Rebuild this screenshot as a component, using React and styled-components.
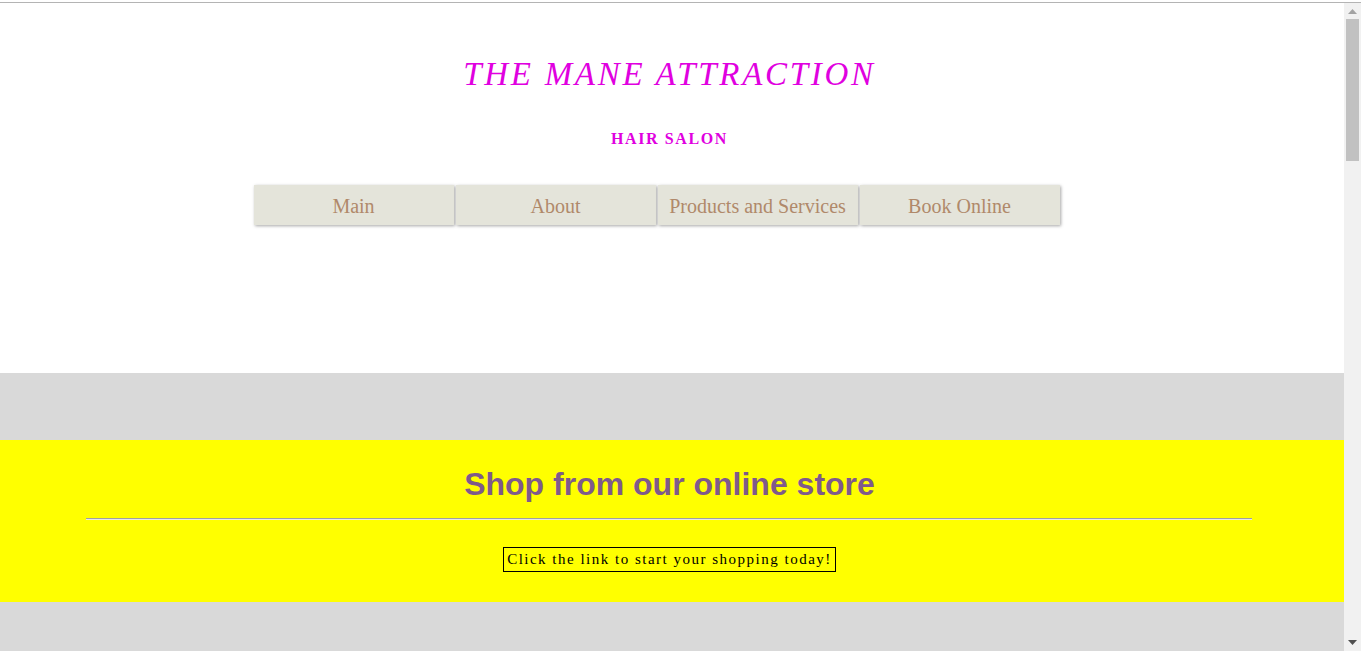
import React from 'react'
import styled, { createGlobalStyle } from 'styled-components'

const GlobalStyle = createGlobalStyle`
  html,
  body {
    margin: 0;
    padding: 0;
    height: 100%;
    overflow: hidden;
    background: #fff;
  }
`

const Window = styled.div`
  display: flex;
  flex-direction: column;
  width: 1361px;
  height: 651px;
`

const TopRule = styled.div`
  height: 2px;
  border-bottom: 1px solid #b4b4b4;
  background: #fff;
`

const Viewport = styled.div`
  flex: 1;
  display: flex;
  min-height: 0;
`

const Page = styled.main`
  flex: 1;
  overflow: hidden;
  background: #d9d9d9;
`

const Header = styled.header`
  display: flex;
  flex-direction: column;
  align-items: center;
  background: #fff;
  padding: 51px 5px 148px 0;
`

const Title = styled.h1`
  margin: 0;
  font-family: 'Liberation Serif', 'Times New Roman', serif;
  font-style: italic;
  font-weight: 400;
  font-size: 33px;
  line-height: 40px;
  letter-spacing: 2.7px;
  color: #e000e0;
`

const Tagline = styled.h2`
  margin: 35px 0 0;
  font-family: 'Liberation Serif', 'Times New Roman', serif;
  font-weight: 700;
  font-size: 16px;
  line-height: 20px;
  letter-spacing: 1.6px;
  color: #e000e0;
`

const Nav = styled.nav`
  display: flex;
  gap: 2px;
  margin: 36px 26px 0 0;
`

const NavButton = styled.a`
  display: flex;
  align-items: center;
  justify-content: center;
  width: 200px;
  height: 40px;
  padding-top: 3px;
  box-sizing: border-box;
  background: #e4e4da;
  box-shadow: 1px 1px 3px rgba(0, 0, 0, 0.35);
  font-family: 'Liberation Serif', 'Times New Roman', serif;
  font-size: 20px;
  color: #b0896a;
  text-decoration: none;
`

const Spacer = styled.div`
  height: 67px;
`

const Store = styled.section`
  display: flex;
  flex-direction: column;
  align-items: center;
  background: #ffff00;
  height: 162px;
  padding: 24px 5px 0 0;
  box-sizing: border-box;
`

const StoreTitle = styled.h2`
  margin: 0;
  font-family: 'Liberation Sans', Arial, sans-serif;
  font-weight: 700;
  font-size: 32px;
  line-height: 40px;
  color: #7f5a8b;
`

const Rule = styled.hr`
  align-self: stretch;
  margin: 14px 87px 0 86px;
  border: 0;
  border-top: 1px solid #a0a0a0;
  border-bottom: 1px solid #e8e8e8;
`

const ShopLink = styled.a`
  margin-top: 27px;
  padding: 3px 3px 3px;
  border: 1px solid #000;
  font-family: 'Liberation Serif', 'Times New Roman', serif;
  font-size: 15px;
  line-height: 17px;
  letter-spacing: 1.5px;
  color: #000;
  text-decoration: none;
`

const Scrollbar = styled.div`
  width: 17px;
  display: flex;
  flex-direction: column;
  align-items: center;
  background: #f1f1f1;
`

const Arrow = styled.div`
  height: 17px;
  display: flex;
  align-items: center;
  justify-content: center;
`

const Track = styled.div`
  flex: 1;
  width: 100%;
  display: flex;
  justify-content: center;
`

const Thumb = styled.div`
  width: 13px;
  height: 142px;
  margin-top: -1px;
  background: #c1c1c1;
`

const Tri = ({ up }) => (
  <svg width="9" height="5" viewBox="0 0 9 5">
    <path d={up ? 'M4.5 0 L9 5 L0 5 Z' : 'M0 0 L9 0 L4.5 5 Z'} fill={up ? '#a3a3a3' : '#505050'} />
  </svg>
)

const links = ['Main', 'About', 'Products and Services', 'Book Online']

const App = () => (
  <Window>
    <GlobalStyle />
    <TopRule />
    <Viewport>
      <Page>
        <Header>
          <Title>THE MANE ATTRACTION</Title>
          <Tagline>HAIR SALON</Tagline>
          <Nav>
            {links.map(l => (
              <NavButton key={l} href="#">
                {l}
              </NavButton>
            ))}
          </Nav>
        </Header>
        <Spacer />
        <Store>
          <StoreTitle>Shop from our online store</StoreTitle>
          <Rule />
          <ShopLink href="#">Click the link to start your shopping today!</ShopLink>
        </Store>
      </Page>
      <Scrollbar>
        <Arrow>
          <Tri up />
        </Arrow>
        <Track>
          <Thumb />
        </Track>
        <Arrow>
          <Tri />
        </Arrow>
      </Scrollbar>
    </Viewport>
  </Window>
)

export default App
